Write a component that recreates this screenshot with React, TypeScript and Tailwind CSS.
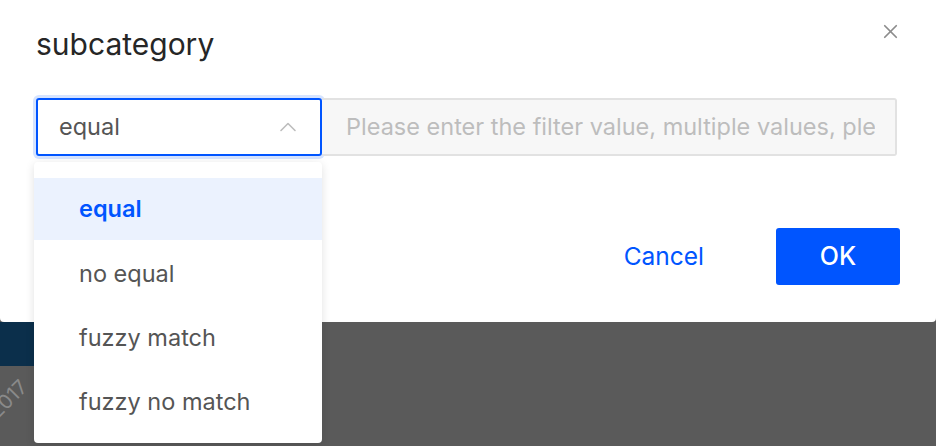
import { ChevronUp, X } from 'lucide-react'

const options = ['equal', 'no equal', 'fuzzy match', 'fuzzy no match']

export default function App() {
  const selected = 'equal'

  return (
    <div className="relative w-[936px] h-[446px] overflow-hidden bg-[#5a5a5a] font-['Inter','Liberation_Sans',sans-serif]">
      {/* page behind the mask */}
      <div className="absolute left-0 top-[322px] w-[40px] h-[44px] bg-[#0b2f4b]" />
      <div className="absolute left-[-14px] top-[384px] -rotate-45 text-[20px] text-[#8a8a8a]">2017</div>

      {/* modal */}
      <div className="relative h-[322px] bg-white rounded-b-[4px] px-9 pt-[26px]">
        <h2 className="text-[30px] leading-[36px] text-[#262626]">subcategory</h2>
        <button className="absolute right-[34px] top-[20px] text-[#8c8c8c]">
          <X className="size-[23px]" strokeWidth={1.8} />
        </button>

        <div className="mt-[36px] flex">
          <div className="w-[286px] h-[58px] flex items-center justify-between pl-[21px] pr-[18px] border-2 border-[#0055ff] rounded-[3px] ring-[3px] ring-[#d6e4ff]">
            <span className="text-[23.5px] text-[#555]">{selected}</span>
            <ChevronUp className="size-[28px] text-[#bdbdbd]" strokeWidth={1.4} />
          </div>
          <div className="w-[575px] h-[58px] flex items-center pl-[24px] pr-[20px] border-2 border-l-0 border-[#e2e2e2] rounded-r-[3px] bg-[#f7f7f7] overflow-hidden">
            <span className="text-[23.5px] text-[#bdbdbd] whitespace-nowrap overflow-hidden">
              Please enter the filter value, multiple values, please separate with commas
            </span>
          </div>
        </div>

        <div className="mt-[72px] flex justify-end items-center">
          <button className="text-[24.5px] text-[#0055ff] mr-[72px]">Cancel</button>
          <button className="w-[124px] h-[57px] rounded-[3px] bg-[#0055ff] text-white text-[25px] font-medium">OK</button>
        </div>
      </div>

      {/* dropdown menu */}
      <div className="absolute left-[34px] top-[162px] w-[288px] h-[281px] bg-white rounded-[4px] shadow-[0_2px_10px_rgba(0,0,0,0.12)] pt-[16px]">
        {options.map((o) => (
          <div
            key={o}
            className={
              o === selected
                ? 'h-[62px] mb-[2px] flex items-center pl-[45px] bg-[#ebf2fe] text-[#0055ff] font-semibold text-[23.5px]'
                : 'h-[64px] flex items-center pl-[45px] text-[#555] text-[23.5px]'
            }
          >
            {o}
          </div>
        ))}
      </div>
    </div>
  )
}
